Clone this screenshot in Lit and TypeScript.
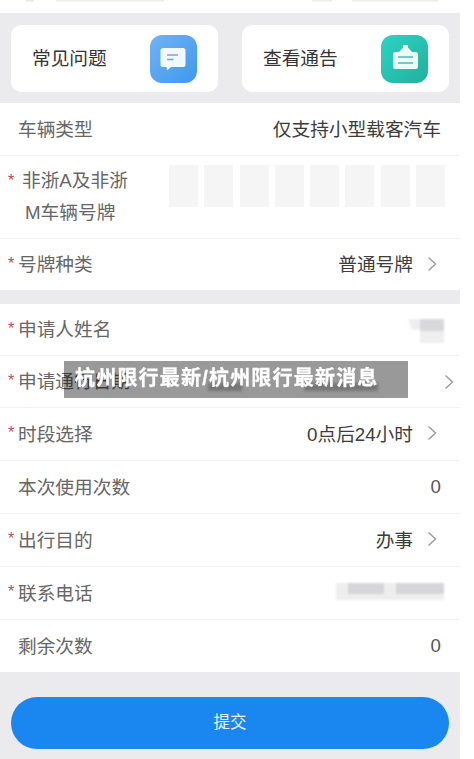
import { LitElement, html, css } from "lit";
import { customElement } from "lit/decorators.js";

const chevron = html`<svg class="chev" viewBox="0 0 10 16" width="10" height="16"><path d="M1.500 1.500 L8.500 8 L1.500 14.500" fill="none" stroke="#9a9a9a" stroke-width="1.400"/></svg>`;

@customElement("app-root")
export class AppRoot extends LitElement {
  static styles = css`
    :host { display: block; width: 474px; height: 759px; background: #fff; overflow: hidden; position: relative;
      font-family: "Liberation Sans", "Noto Sans CJK SC", sans-serif; }
    .page { width: 460px; height: 759px; display: flex; flex-direction: column; filter: blur(0.5px); }
    .top { height: 13px; background: #fff; display: block; flex: none; }
    .band { height: 90px; flex: none; background: #ebebed; box-sizing: border-box; padding: 12px 11px 11px; display: flex; gap: 24px; }
    .card { flex: 1; background: #fff; border-radius: 10px; display: flex; align-items: center; justify-content: space-between;
      padding: 0 21.500px 4px 21px; font-size: 18.700px; color: #333; }
    .ic { width: 47px; height: 48px; border-radius: 12px; display: block; margin-bottom: -4px; }
    .row { height: 53px; flex: none; box-sizing: border-box; border-bottom: 1px solid #f2f2f4; display: flex; align-items: center;
      padding: 0 19px 4px 18px; background: #fff; font-size: 18.700px; color: #666; position: relative; }
    .row.h52 { height: 52px; }
    .row.h51 { height: 51px; border-bottom: none; }
    .row.end { height: 52px; border-bottom: none; }
    .row.tall { height: 83px; align-items: flex-start; padding-top: 9px; }
    .tall .lab { line-height: 31.500px; }
    .l1 { display: block; margin-left: 4px; }
    .l2 { display: block; margin-left: 7px; }
    .lab { flex: 1; white-space: nowrap; }
    .req::before { content: "*"; position: absolute; left: 8px; top: 50%; margin-top: -11px; color: #c8404a; font-size: 16px; line-height: 20px; }
    .tall.req::before { top: 15px; margin-top: 0; }
    .val { color: #3c3c3c; }
    .chev { margin-left: 14px; margin-right: 4px; flex: none; margin-top: 2px; }
    .chev.far { margin-left: 0; margin-right: -13px; margin-top: 4px; }
    .num { color: #555; margin-top: 3px; }
    .sep { height: 14px; flex: none; background: #ebebed; }
    .boxes { display: flex; gap: 6.300px; margin-right: -4px; }
    .boxes i { display: block; width: 29px; height: 42px; background: #f5f5f6; }
    .fill { flex: 1; background: #ebebed; padding: 25px 11px 0; }
    .btn { height: 51.500px; box-sizing: border-box; padding-bottom: 3px; border-radius: 26px; background: #1a87f0; color: #e8f3fe; font-size: 16.500px;
      display: flex; align-items: center; justify-content: center; }
    .mask { display: block; flex: none; filter: blur(1.200px); }
    .m-name { margin-right: -3px; margin-top: 7px; }
    .m-phone { margin-right: -3px; margin-top: 2px; }
    .m-date { margin-right: 66px; margin-top: 6px; filter: blur(1.600px); }
    .ol { position: absolute; left: 64px; top: 361px; width: 344px; height: 37px; box-sizing: border-box; padding-left: 11px;
      background: rgba(0,0,0,.4); color: #fff; font-weight: 700; font-size: 20px; letter-spacing: 1.200px; line-height: 34px;
      white-space: nowrap; -webkit-text-stroke: 0.300px #fff; }
  `;

  render() {
    return html`
      <div class="page">
        <svg class="top" width="460" height="13" viewBox="0 0 460 13">
          <rect x="26" y="0" width="8" height="1.500" fill="#e6e6e6"/>
          <rect x="56" y="0" width="108" height="1.500" fill="#ececec"/>
          <rect x="312" y="0" width="20" height="1.500" fill="#ececec"/>
          <rect x="352" y="0" width="86" height="1.500" fill="#ececec"/>
        </svg>
        <div class="band">
          <div class="card">常见问题
            <svg class="ic" viewBox="0 0 47 48">
              <defs><linearGradient id="b" x1="0" y1="0" x2="1" y2="1"><stop offset="0" stop-color="#70b4f4"/><stop offset="1" stop-color="#3f97ee"/></linearGradient></defs>
              <rect width="47" height="48" fill="url(#b)"/>
              <path d="M13 13h20a2.500 2.500 0 0 1 2.500 2.500v14a2.500 2.500 0 0 1-2.500 2.500H21l-4 3.500-.5-3.500H13a2.500 2.500 0 0 1-2.500-2.500v-14A2.500 2.500 0 0 1 13 13z" fill="#f2f8fe"/>
              <path d="M17 20h11M17 24.500h6.500" stroke="#6fa9dc" stroke-width="1.600" fill="none"/>
            </svg>
          </div>
          <div class="card">查看通告
            <svg class="ic" viewBox="0 0 47 48">
              <defs><linearGradient id="g" x1="0" y1="0" x2="1" y2="1"><stop offset="0" stop-color="#2ed3c6"/><stop offset="1" stop-color="#20b09c"/></linearGradient></defs>
              <rect width="47" height="48" fill="url(#g)"/>
              <path d="M22 10h5v2.500l4 4.500h3.500a2.500 2.500 0 0 1 2.500 2.500v12a2.500 2.500 0 0 1-2.500 2.500h-20a2.500 2.500 0 0 1-2.500-2.500v-12a2.500 2.500 0 0 1 2.500-2.500H18l4-4.500z" fill="#eefbf9"/>
              <path d="M17 22h15M17 28h15" stroke="#45bfb0" stroke-width="1.700" fill="none"/>
            </svg>
          </div>
        </div>
        <div class="row"><span class="lab">车辆类型</span><span class="val">仅支持小型载客汽车</span></div>
        <div class="row tall req"><span class="lab"><span class="l1">非浙A及非浙</span><span class="l2">M车辆号牌</span></span>
          <div class="boxes">${[0,1,2,3,4,5,6,7].map(() => html`<i></i>`)}</div></div>
        <div class="row h51 req"><span class="lab">号牌种类</span><span class="val">普通号牌</span>${chevron}</div>
        <div class="sep"></div>
        <div class="row h52 req"><span class="lab">申请人姓名</span>
          <svg class="mask m-name" width="36" height="24" viewBox="0 0 36 24"><path d="M0 0h36v24H12V11H4z" fill="#eeeeef"/><rect x="12" y="0" width="24" height="12" fill="#d8d8da"/></svg></div>
        <div class="row h52 req"><span class="lab">申请通行日期</span>
          <svg class="mask m-date" width="170" height="18" viewBox="0 0 170 18"><rect width="34" height="8" y="9" x="0" fill="#c4c4c4"/><rect width="74" height="8" y="9" x="96" fill="#c4c4c4"/></svg><svg class="chev far" viewBox="0 0 10 16" width="10" height="16"><path d="M1.500 1.500 L8.500 8 L1.500 14.500" fill="none" stroke="#9a9a9a" stroke-width="1.400"/></svg></div>
        <div class="row req"><span class="lab">时段选择</span><span class="val">0点后24小时</span>${chevron}</div>
        <div class="row"><span class="lab">本次使用次数</span><span class="num">0</span></div>
        <div class="row req"><span class="lab">出行目的</span><span class="val">办事</span>${chevron}</div>
        <div class="row req"><span class="lab">联系电话</span>
          <svg class="mask m-phone" width="108" height="18" viewBox="0 0 108 18"><rect width="108" height="17" fill="#eeeeef"/><rect x="12" width="36" height="11" fill="#d6d6d8"/><rect x="60" width="48" height="11" fill="#d6d6d8"/></svg></div>
        <div class="row end"><span class="lab">剩余次数</span><span class="num">0</span></div>
        <div class="fill"><div class="btn">提交</div></div>
      </div>
      <div class="ol">杭州限行最新/杭州限行最新消息</div>
    `;
  }
}
